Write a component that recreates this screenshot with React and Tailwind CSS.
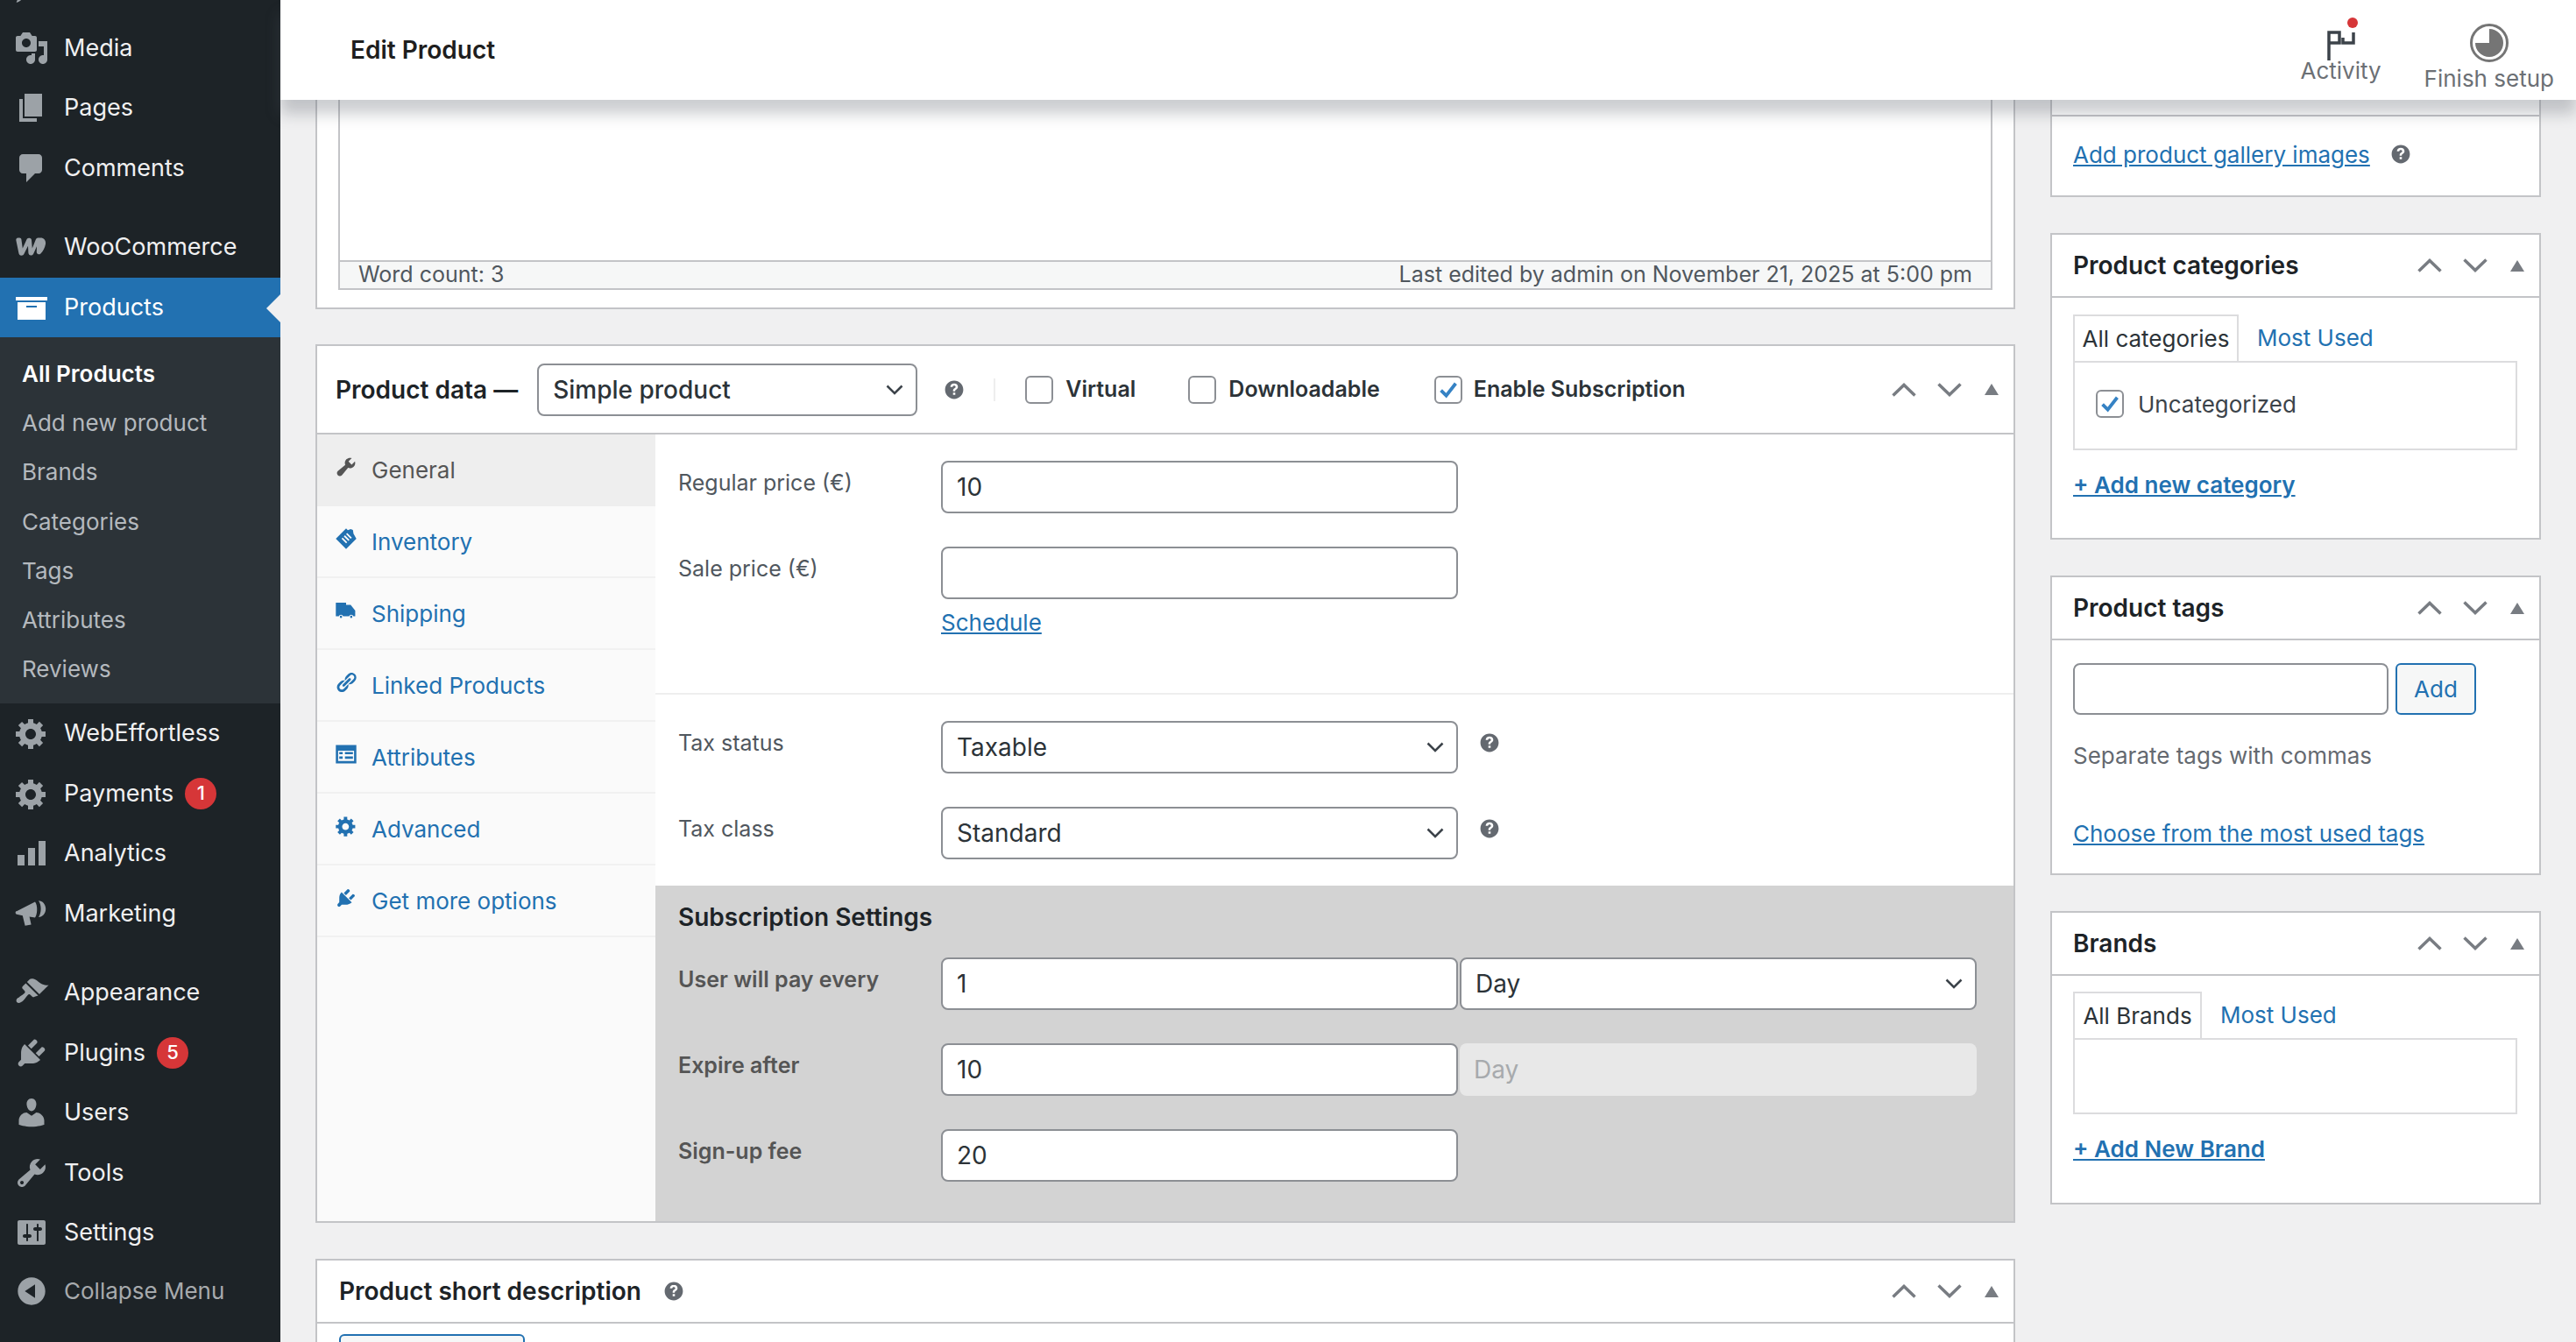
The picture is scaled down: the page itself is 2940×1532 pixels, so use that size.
import React from 'react';

const FONT = 'font-["Inter",sans-serif]';

// dashicons-style glyphs, 20x20 box
const paths = {
  posts: 'M10.44 3.02l1.82-1.82 6.36 6.35-1.83 1.82c-1.05-.68-2.48-.57-3.41.36l-.75.75c-.92.93-1.04 2.35-.35 3.41l-1.83 1.82-2.41-2.41-2.8 2.79c-.42.42-3.38 2.71-3.8 2.29s1.86-3.39 2.28-3.81l2.79-2.79L4.1 9.36l1.83-1.82c1.05.69 2.48.57 3.4-.36l.75-.75c.93-.92 1.05-2.35.36-3.41z',
  media: 'M13 11V4c0-.55-.45-1-1-1h-1.67L9 1H5L3.67 3H2c-.55 0-1 .45-1 1v7c0 .55.45 1 1 1h10c.55 0 1-.45 1-1zM7 4.5c1.38 0 2.5 1.12 2.5 2.5S8.38 9.5 7 9.5 4.5 8.38 4.5 7 5.62 4.5 7 4.5zM14 6h5v10.5c0 1.38-1.12 2.5-2.5 2.5S14 17.88 14 16.5s1.12-2.5 2.5-2.5c.17 0 .34.02.5.05V9h-3V6zm-4 8.05V13h2v3.5c0 1.38-1.12 2.5-2.5 2.5S7 17.88 7 16.5 8.12 14 9.5 14c.17 0 .34.02.5.05z',
  pages: 'M6 15V2h10v13H6zm-1 1h8v2H3V5h2v11z',
  comments: 'M5 2h9c1.1 0 2 .9 2 2v7c0 1.1-.9 2-2 2h-2l-5 5v-5H5c-1.1 0-2-.9-2-2V4c0-1.1.9-2 2-2z',
  woo: 'M1.2 6.2c-.2-.8.3-1.5 1.1-1.5h.9c.5 0 .9.4 1 .9l.7 5.2 2.3-5c.2-.5.6-.9 1.2-.9h.5c.6 0 1 .5 1.1 1.1l.4 4.7 2-5c.3-.7.9-1 1.6-1h1.2c.9 0 1.6.3 2.1.9.5.6.9 1.5.7 2.6-.3 2-1.4 4.2-2.8 5.5-.5.5-1.1.5-1.6.3-.5-.3-.8-.8-.7-1.4l.1-3-1.8 4c-.3.7-.9 1.2-1.6 1.2-.8 0-1.3-.6-1.4-1.4L8 9.4l-2.2 4.4c-.3.7-.9 1.1-1.6 1.1-.8 0-1.4-.6-1.5-1.4z',
  archive: 'M19 4v2H1V4h18zM2 7h16v10H2V7zm11 3V9H7v1h6z',
  gear: 'M18 12h-2.18c-.17.7-.44 1.35-.81 1.93l1.54 1.54-2.1 2.1-1.54-1.54c-.58.36-1.23.63-1.91.79V19H8v-2.18c-.68-.16-1.33-.43-1.91-.79l-1.54 1.54-2.12-2.12 1.54-1.54c-.36-.58-.63-1.23-.79-1.91H1V9.03h2.17c.16-.7.44-1.35.8-1.94L2.43 5.55l2.1-2.1 1.54 1.54c.58-.37 1.24-.64 1.93-.81V2h3v2.18c.68.16 1.33.43 1.91.79l1.54-1.54 2.12 2.12-1.54 1.54c.36.59.64 1.24.8 1.94H18V12zm-8.5 1.5c1.66 0 3-1.34 3-3s-1.34-3-3-3-3 1.34-3 3 1.34 3 3 3z',
  analytics: 'M2 11h4v6H2zM8 7h4v10H8zM14 3h4v14h-4z',
  megaphone: 'M1.5 8.6L12 3.2c.8 1 1.3 3 1.1 5.2-.1 1.6-.5 3-1.1 3.9l-3.2-.5 1 4.4-3.5.7-1.4-5.8-3.4-.7c-.7-.2-.9-1.3-.4-1.8zM14 2.6c2.3 0 4.1 2.1 4.1 4.7S16.3 12 14 12c.9-1.2 1.3-3 1.3-4.7S14.9 3.800 14 2.600zm1.300 3c.7 0 1.300.8 1.300 1.700s-.6 1.700-1.300 1.700c.2-.5.3-1.100.3-1.700s-.1-1.200-.3-1.700z',
  appearance: 'M14.48 11.06L7.41 3.99l1.5-1.5c.5-.56 2.3-.47 3.51.32 1.21.8 1.43 1.28 2.91 2.1 1.18.64 2.45 1.26 4.45.85zm-.71.71L6.7 4.7 4.93 6.47c-.39.39-.39 1.02 0 1.41l1.06 1.06c.39.39.39 1.03 0 1.42-.6.6-1.43 1.11-2.21 1.69-.35.26-.7.53-1.01.84C1.43 13.23.91 14.8 1.71 15.6c.79.8 2.36.28 3.7-1.06.3-.3.57-.65.83-1 .58-.78 1.1-1.61 1.7-2.21.39-.39 1.02-.39 1.41 0l1.06 1.06c.39.39 1.02.39 1.41 0z',
  plugins: 'M13.11 4.36L9.87 7.6 8 5.73l3.24-3.24c.35-.34 1.05-.2 1.56.32.52.51.66 1.21.31 1.55zm-8 1.77l.91-1.12 9.01 9.01-1.19.84c-.71.71-2.63 1.16-3.82 1.16H6.14L4.9 17.26c-.59.59-1.54.59-2.12 0-.59-.58-.59-1.53 0-2.12l1.24-1.24v-3.88c0-1.13.4-3.19 1.09-3.89zm7.26 3.97l3.24-3.24c.34-.35 1.04-.21 1.55.31.52.51.66 1.21.31 1.55l-3.24 3.25z',
  users: 'M10 9.25c-2.27 0-2.73-3.44-2.73-3.44C7 4.02 7.82 2 9.97 2c2.16 0 2.98 2.02 2.71 3.81 0 0-.41 3.44-2.68 3.44zm0 2.57L12.72 10c2.39 0 4.52 2.33 4.52 4.53v2.49s-3.65 1.13-7.24 1.13c-3.65 0-7.24-1.13-7.24-1.13v-2.49c0-2.25 1.94-4.48 4.47-4.48z',
  tools: 'M16.68 9.77c-1.34 1.34-3.3 1.67-4.95.99l-5.41 6.52c-.99.99-2.59.99-3.58 0s-.99-2.59 0-3.57l6.52-5.42c-.68-1.65-.35-3.61.99-4.95 1.28-1.28 3.12-1.62 4.72-1.06l-2.89 2.89 2.82 2.82 2.86-2.87c.53 1.58.18 3.39-1.08 4.65zM3.81 16.21c.4.39 1.04.39 1.43 0 .4-.4.4-1.04 0-1.43-.39-.4-1.03-.4-1.43 0-.39.39-.39 1.03 0 1.43z',
  settings: 'M18 16V4c0-.55-.45-1-1-1H3c-.55 0-1 .45-1 1v12c0 .55.45 1 1 1h14c.55 0 1-.45 1-1zM8 11h1c.55 0 1 .45 1 1s-.45 1-1 1H8v1.500c0 .28-.22.5-.5.5s-.5-.22-.5-.5V13H6c-.55 0-1-.45-1-1s.45-1 1-1h1V5.500c0-.28.22-.5.5-.5s.5.22.5.5V11zm5-2h-1c-.55 0-1-.45-1-1s.45-1 1-1h1V5.500c0-.28.22-.5.5-.5s.5.22.5.5V7h1c.55 0 1 .45 1 1s-.45 1-1 1h-1v5.500c0 .28-.22.5-.5.5s-.5-.22-.5-.5V9z',
  collapse: 'M10 2.160c4.330 0 7.840 3.510 7.840 7.840s-3.510 7.840-7.840 7.840S2.160 14.330 2.160 10 5.710 2.160 10 2.160zm2 11.720V6.120L6.180 9.970z',
  help: 'M10 2c4.420 0 8 3.580 8 8s-3.580 8-8 8-8-3.580-8-8 3.580-8 8-8zm1 12.500v-2H9v2h2zm-1-10c-2 0-3.200 1.100-3.400 3h2c.1-.7.6-1.200 1.400-1.200.8 0 1.300.5 1.300 1.100 0 .6-.3.9-1 1.300-1 .6-1.300 1.300-1.300 2.300v.4h1.900v-.3c0-.6.2-.9.9-1.300 1-.6 1.500-1.400 1.500-2.500 0-1.700-1.300-2.800-3.300-2.800z',
  wrench: 'M16.68 9.770c-1.340 1.340-3.300 1.670-4.950.990l-5.410 6.520c-.990.990-2.590.990-3.580 0s-.990-2.590 0-3.570l6.520-5.420c-.680-1.650-.350-3.610.990-4.950 1.280-1.280 3.120-1.620 4.720-1.060l-2.890 2.890 2.820 2.820 2.860-2.870c.530 1.580.180 3.390-1.080 4.650z',
  tag: 'M10 1l1.500 1.500L14 1.500l2 .8.500 3.200 2.500 4.500-9 9-9-9zm-4 9l4 4 1-1-4-4zm2-2l4 4 1-1-4-4zm2-2l4 4 1-1-4-4z',
  truck: 'M1 3h9v2h4l4 5v5h-1.600a2 2 0 0 0-3.800 0H7.400a2 2 0 0 0-3.800 0H1zM5.500 14.500a1 1 0 1 1 0 2 1 1 0 0 1 0-2zm9 0a1 1 0 1 1 0 2 1 1 0 0 1 0-2z',
  link: 'M17.740 2.760c1.680 1.690 1.680 4.410 0 6.100l-1.530 1.520c-1.120 1.120-2.700 1.490-4.130 1.130l2.950-2.950.760-.760.760-.760c.840-.840.840-2.200 0-3.050-.840-.840-2.200-.840-3.050 0l-.760.760-3.710 3.710c-.360-1.430.010-3.010 1.130-4.130l1.520-1.530c1.690-1.680 4.410-1.680 6.100 0zM8.590 13.430l5.340-5.340c.420-.420.420-1.100 0-1.520-.440-.430-1.130-.400-1.530 0l-5.330 5.340c-.420.420-.420 1.100 0 1.520.440.430 1.130.400 1.520 0zm-.760 2.290l4.140-4.150c.380 1.440 0 3.020-1.130 4.150l-1.520 1.520c-1.690 1.690-4.410 1.690-6.100 0-1.680-1.680-1.680-4.410 0-6.100l1.530-1.520c1.130-1.130 2.710-1.500 4.140-1.130l-4.140 4.140c-.840.840-.840 2.200 0 3.050.840.840 2.200.840 3.050 0z',
  list: 'M1 2h18v16H1zm2 5v9h14V7zm1 1h3v2H4zm5 0h7v2H9zm-5 4h3v2H4zm5 0h7v2H9z',
};

const Glyph = ({ name, className }) => (
  <svg viewBox="0 0 20 20" className={className} fill="currentColor">
    <path d={paths[name]} />
  </svg>
);

const SideItem = ({ icon, label, badge, active }) => (
  <div className={`relative flex h-[68.5px] items-center pl-4 text-[27px] ${active ? 'bg-[#2271b1] text-white' : 'text-[#f0f0f1]'}`}>
    <Glyph name={icon} className={`h-10 w-10 shrink-0 ${active ? 'text-white' : 'text-[#9ca2a7]'}`} />
    <span className="ml-[17px]">{label}</span>
    {badge && (
      <span className="ml-[13px] flex h-9 w-9 items-center justify-center rounded-full bg-[#d63638] text-[22px] font-medium text-white">{badge}</span>
    )}
    {active && (
      <span className="absolute right-0 top-[19px] h-0 w-0 border-y-[16px] border-r-[16px] border-y-transparent border-r-[#f0f0f1]" />
    )}
  </div>
);

const Sidebar = () => (
  <aside className="h-[1532px] w-[320px] shrink-0 overflow-hidden bg-[#1d2327]">
    <div className="-mt-[48px]">
      <SideItem icon="posts" label="Posts" />
    </div>
    <SideItem icon="media" label="Media" />
    <SideItem icon="pages" label="Pages" />
    <SideItem icon="comments" label="Comments" />
    <div className="h-[22px]" />
    <SideItem icon="woo" label="WooCommerce" />
    <SideItem icon="archive" label="Products" active />
    <div className="h-[418px] bg-[#2c3338] pt-[13px]">
      {['All Products', 'Add new product', 'Brands', 'Categories', 'Tags', 'Attributes', 'Reviews'].map((s, i) => (
        <div key={s} className={`flex h-[56.3px] items-center pl-[25px] text-[26px] ${i === 0 ? 'font-semibold text-white' : 'text-[#b4b9be]'}`}>{s}</div>
      ))}
    </div>
    <SideItem icon="gear" label="WebEffortless" />
    <SideItem icon="gear" label="Payments" badge="1" />
    <SideItem icon="analytics" label="Analytics" />
    <SideItem icon="megaphone" label="Marketing" />
    <div className="h-[22px]" />
    <SideItem icon="appearance" label="Appearance" />
    <SideItem icon="plugins" label="Plugins" badge="5" />
    <SideItem icon="users" label="Users" />
    <SideItem icon="tools" label="Tools" />
    <SideItem icon="settings" label="Settings" />
    <div className="flex h-[64px] items-center pl-4 text-[26px] text-[#a7aaad]">
      <Glyph name="collapse" className="h-10 w-10 shrink-0 text-[#9ca2a7]" />
      <span className="ml-[17px]">Collapse Menu</span>
    </div>
  </aside>
);

const TopBar = () => (
  <header className="relative z-10 flex h-[114px] shrink-0 items-center justify-between bg-white pl-[80px] shadow-[0_16px_16px_0_rgba(85,93,102,0.3)]">
    <h1 className="text-[28px] font-semibold text-[#1e1e1e]">Edit Product</h1>
    <div className="flex pr-[25px]">
      <div className="mr-[49px] flex flex-col items-center">
        <div className="relative h-[52px] w-[44px] pt-[5px]">
          <svg viewBox="0 0 32 34" className="h-[38px] w-[32px] translate-x-[6px] translate-y-[17px]" fill="none" stroke="#3c434a" strokeWidth="3.500">
            <path d="M2 34V2h12v12H2M18 8v6h12V2" />
          </svg>
          <span className="absolute right-[3px] top-[9px] h-3 w-3 rounded-full bg-[#d63638]" />
        </div>
        <span className="mt-[4px] text-[26px] leading-[28px] text-[#6c7075]">Activity</span>
      </div>
      <div className="flex flex-col items-center">
        <svg viewBox="0 0 44 44" className="mt-[16px] h-[44px] w-[44px]">
          <circle cx="22" cy="22" r="20.500" fill="none" stroke="#757575" strokeWidth="3" />
          <path d="M22 6a16 16 0 1 1-16 16h16z" fill="#757575" />
        </svg>
        <span className="mt-[5px] text-[26px] leading-[28px] text-[#6c7075]">Finish setup</span>
      </div>
    </div>
  </header>
);

const Arrows = () => (
  <div className="flex items-center">
    <svg viewBox="0 0 28 16" className="h-4 w-[28px]" fill="none" stroke="#787c82" strokeWidth="3.500"><path d="M1.500 14.500L14 2.500l12.500 12" /></svg>
    <svg viewBox="0 0 28 16" className="ml-6 h-4 w-[28px]" fill="none" stroke="#787c82" strokeWidth="3.500"><path d="M1.500 1.500L14 13.500l12.500-12" /></svg>
    <span className="ml-[26px] h-0 w-0 border-x-[8px] border-b-[13px] border-x-transparent border-b-[#787c82]" />
  </div>
);

const Help = ({ className }) => <Glyph name="help" className={`text-[#646970] ${className}`} />;

const Check = ({ checked }) => (
  <span className="flex h-[32px] w-[32px] shrink-0 items-center justify-center rounded-[6px] border-2 border-[#8c8f94] bg-white">
    {checked && (
      <svg viewBox="0 0 20 20" className="h-[24px] w-[24px]" fill="none" stroke="#3582c4" strokeWidth="3.200"><path d="M3 10.500l5 5L17 4" /></svg>
    )}
  </span>
);

const Chevron = () => (
  <svg viewBox="0 0 20 12" className="h-[12px] w-[20px] shrink-0" fill="none" stroke="#3c434a" strokeWidth="2.500"><path d="M1.500 1.500L10 10l8.500-8.500" /></svg>
);

const Field = ({ value, className = 'w-[590px]' }) => (
  <div className={`flex h-[60px] items-center rounded-[8px] border-2 border-[#8c8f94] bg-white pl-4 text-[28px] text-[#2c3338] ${className}`}>{value}</div>
);

const Select = ({ value, className = 'w-[590px]' }) => (
  <div className={`flex h-[60px] items-center justify-between rounded-[8px] border-2 border-[#8c8f94] bg-white pl-4 pr-[14px] text-[28px] text-[#2c3338] ${className}`}>
    <span>{value}</span>
    <Chevron />
  </div>
);

const tabs = [
  ['wrench', 'General'],
  ['tag', 'Inventory'],
  ['truck', 'Shipping'],
  ['link', 'Linked Products'],
  ['list', 'Attributes'],
  ['gear', 'Advanced'],
  ['plugins', 'Get more options'],
];

const Row = ({ label, children, className = '', labelClass = 'text-[25px] text-[#50575e]' }) => (
  <div className={`flex items-start pl-[26px] ${className}`}>
    <label className={`mt-[10px] w-[300px] leading-[30px] ${labelClass}`}>{label}</label>
    {children}
  </div>
);

const ProductData = () => (
  <section className="mt-[40px] border-2 border-[#c3c4c7] bg-white">
    <div className="flex h-[101px] items-center border-b-2 border-[#c3c4c7] pr-[17px]">
      <span className="ml-[21px] text-[28px] font-semibold text-[#1d2327]">Product data —</span>
      <div className="ml-[22px]"><Select value="Simple product" className="w-[434px] font-medium" /></div>
      <Help className="ml-[29px] h-[26px] w-[26px]" />
      <span className="ml-[32px] h-[26px] w-[2px] bg-[#eeeeee]" />
      <span className="ml-[34px]"><Check /></span>
      <span className="ml-[14px] text-[25px] font-semibold text-[#2c3338]">Virtual</span>
      <span className="ml-[60px]"><Check /></span>
      <span className="ml-[14px] text-[25px] font-semibold text-[#2c3338]">Downloadable</span>
      <span className="ml-[62px]"><Check checked /></span>
      <span className="ml-[13px] text-[25px] font-semibold text-[#2c3338]">Enable Subscription</span>
      <div className="ml-auto"><Arrows /></div>
    </div>
    <div className="flex">
      <nav className="w-[386px] shrink-0 bg-[#fafafa]">
        {tabs.map(([icon, label], i) => (
          <div key={label} className={`flex h-[82px] items-center border-b-2 pl-[20px] text-[26px] ${i === 0 ? 'border-[#eeeeee] bg-[#eeeeee] text-[#555555]' : 'border-[#f1f1f1] text-[#2271b1]'}`}>
            <Glyph name={icon} className="mb-[6px] h-[26px] w-[26px] shrink-0" />
            <span className="ml-[16px]">{label}</span>
          </div>
        ))}
      </nav>
      <div className="min-w-0 flex-1">
        <div className="border-b-2 border-[#eeeeee] pb-[64px] pt-[30px]">
          <Row label="Regular price (€)"><Field value="10" /></Row>
          <Row label="Sale price (€)" className="mt-[38px]"><Field value="" /></Row>
          <a className="ml-[326px] mt-[11px] block text-[26px] leading-[32px] text-[#2271b1] underline">Schedule</a>
        </div>
        <div className="pb-[30px] pt-[30px]">
          <Row label="Tax status"><Select value="Taxable" /><Help className="ml-[23px] mt-[12px] h-[26px] w-[26px]" /></Row>
          <Row label="Tax class" className="mt-[38px]"><Select value="Standard" /><Help className="ml-[23px] mt-[12px] h-[26px] w-[26px]" /></Row>
        </div>
        <div className="h-[383px] bg-[#d3d3d3] pt-[18px]">
          <h4 className="pl-[26px] text-[28px] font-semibold leading-[36px] text-[#1d2327]">Subscription Settings</h4>
          <Row label="User will pay every" className="mt-[28px]" labelClass="text-[25px] font-semibold text-[#555555]">
            <Field value="1" />
            <Select value="Day" className="w-[590px] ml-[2px]" />
          </Row>
          <Row label="Expire after" className="mt-[38px]" labelClass="text-[25px] font-semibold text-[#555555]">
            <Field value="10" />
            <div className="ml-[2px] flex h-[60px] w-[590px] items-center rounded-[8px] bg-[#e8e8e8] pl-4 text-[28px] text-[#a7aaad]">Day</div>
          </Row>
          <Row label="Sign-up fee" className="mt-[38px]" labelClass="text-[25px] font-semibold text-[#555555]"><Field value="20" /></Row>
        </div>
      </div>
    </div>
  </section>
);

const MainColumn = () => (
  <div className="w-[1940px] shrink-0">
    <section className="border-x-2 border-b-2 border-[#c3c4c7] bg-white pb-[20px]">
      <div className="mx-[24px] border-x-2 border-[#c3c4c7]">
        <div className="h-[183px]" />
        <div className="flex h-[34px] items-center justify-between border-y-2 border-[#c3c4c7] bg-[#f6f7f7] pl-[21px] pr-[21px] text-[25px] text-[#50575e]">
          <span>Word count: 3</span>
          <span>Last edited by admin on November 21, 2025 at 5:00 pm</span>
        </div>
      </div>
    </section>
    <ProductData />
    <section className="mt-[41px] border-x-2 border-t-2 border-[#c3c4c7] bg-white">
      <div className="flex h-[72px] items-center border-b-2 border-[#c3c4c7] pl-[25px] pr-[17px]">
        <h2 className="text-[28px] font-semibold text-[#1d2327]">Product short description</h2>
        <Help className="ml-[24px] h-[26px] w-[26px]" />
        <div className="ml-auto"><Arrows /></div>
      </div>
      <div className="flex h-[60px] items-start justify-between pl-[25px] pr-[25px] pt-[12px]">
        <button className="flex h-[60px] w-[212px] items-center justify-center rounded-[6px] border-2 border-[#2271b1] bg-[#f6f7f7] text-[26px] text-[#2271b1]">
          <Glyph name="media" className="mr-[6px] h-[36px] w-[36px]" />Add Media
        </button>
        <div className="mt-[14px] flex">
          <div className="flex h-[60px] w-[108px] justify-center border-2 border-[#dcdcde] bg-[#f6f7f7] pt-[8px] text-[25px] text-[#50575e]">Visual</div>
          <div className="ml-[10px] flex h-[60px] w-[100px] justify-center border-2 border-[#dcdcde] bg-[#f0f0f1] pt-[8px] text-[25px] text-[#50575e]">Code</div>
        </div>
      </div>
    </section>
  </div>
);

const BoxHead = ({ title }) => (
  <div className="flex h-[72px] items-center justify-between border-b-2 border-[#c3c4c7] pl-[24px] pr-[17px]">
    <h2 className="text-[28px] font-semibold text-[#1d2327]">{title}</h2>
    <Arrows />
  </div>
);

const SubTabs = ({ first, tabClass, panelClass, children }) => (
  <div>
    <div className="flex items-center text-[26px]">
      <div className={`flex h-[53px] items-center justify-center border-x-2 border-t-2 border-[#dcdcde] text-[#2c3338] ${tabClass}`}>{first}</div>
      <a className="ml-[21px] text-[#2271b1]">Most Used</a>
    </div>
    <div className={`w-[507px] border-2 border-[#dcdcde] ${panelClass}`}>{children}</div>
  </div>
);

const RightColumn = () => (
  <div className="ml-[40px] w-[560px] shrink-0">
    <section className="border-x-2 border-b-2 border-[#c3c4c7] bg-white">
      <div className="h-[19px] border-b-2 border-[#c3c4c7]" />
      <div className="flex h-[90px] items-center pb-[4px] pl-[24px] text-[26px]">
        <a className="text-[#2271b1] underline">Add product gallery images</a>
        <Help className="ml-[22px] h-[26px] w-[26px]" />
      </div>
    </section>
    <section className="mt-[41px] h-[350px] border-2 border-[#c3c4c7] bg-white">
      <BoxHead title="Product categories" />
      <div className="pl-[24px] pt-[19px]">
        <SubTabs first="All categories" tabClass="w-[189px]" panelClass="h-[102px]">
          <div className="flex h-full items-center pb-[4px] pl-[24px] text-[26px] text-[#3c434a]">
            <Check checked /><span className="ml-[16px]">Uncategorized</span>
          </div>
        </SubTabs>
        <a className="mt-[22px] block text-[26px] font-semibold leading-[36px] text-[#2271b1] underline">+ Add new category</a>
      </div>
    </section>
    <section className="mt-[41px] h-[342px] border-2 border-[#c3c4c7] bg-white">
      <BoxHead title="Product tags" />
      <div className="pl-[24px] pt-[26px]">
        <div className="flex gap-2">
          <div className="h-[59px] w-[360px] rounded-[8px] border-2 border-[#8c8f94]" />
          <button className="h-[59px] w-[92px] rounded-[6px] border-2 border-[#2271b1] bg-[#f6f7f7] text-[26px] text-[#2271b1]">Add</button>
        </div>
        <p className="mt-[29px] text-[26px] leading-[36px] text-[#646970]">Separate tags with commas</p>
        <a className="mt-[53px] block text-[26px] leading-[36px] text-[#2271b1] underline">Choose from the most used tags</a>
      </div>
    </section>
    <section className="mt-[41px] h-[335px] border-2 border-[#c3c4c7] bg-white">
      <BoxHead title="Brands" />
      <div className="pl-[24px] pt-[18px]">
        <SubTabs first="All Brands" tabClass="w-[147px]" panelClass="h-[87px]" />
        <a className="mt-[22px] block text-[26px] font-semibold leading-[36px] text-[#2271b1] underline">+ Add New Brand</a>
      </div>
    </section>
  </div>
);

export default function App() {
  return (
    <div className={`flex h-[1532px] w-[2940px] overflow-hidden bg-[#f0f0f1] ${FONT}`}>
      <Sidebar />
      <div className="flex min-w-0 flex-1 flex-col">
        <TopBar />
        <div className="flex px-[40px]">
          <MainColumn />
          <RightColumn />
        </div>
      </div>
    </div>
  );
}
